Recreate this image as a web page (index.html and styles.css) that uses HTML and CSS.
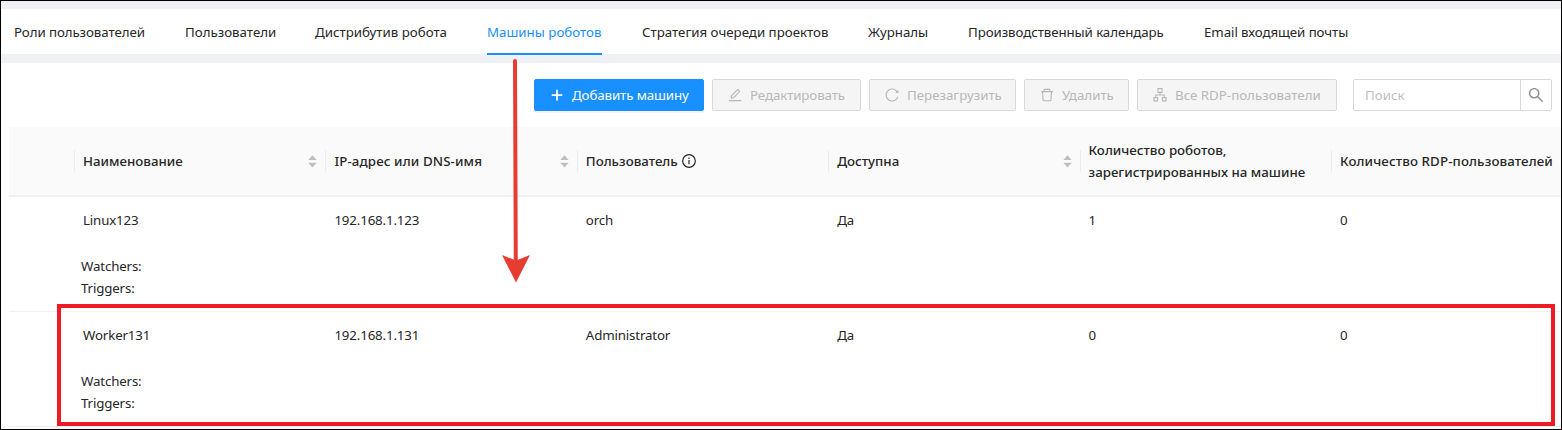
FILE: index.html
```html
<!DOCTYPE html>
<html lang="ru">
<head>
<meta charset="utf-8">
<title>Машины роботов</title>
<link rel="stylesheet" href="styles.css">
</head>
<body>
<svg class="defs" width="0" height="0">
  <symbol id="sorter" viewBox="0 0 9 13"><path d="M4.5 .3 8.7 5H.3zM4.5 12.5.3 7.8h8.4z"/></symbol>
</svg>
<div class="page">
  <nav class="tabs">
    <a class="tab tight">Роли пользователей</a>
    <a class="tab">Пользователи</a>
    <a class="tab">Дистрибутив робота</a>
    <a class="tab active">Машины роботов</a>
    <a class="tab">Стратегия очереди проектов</a>
    <a class="tab">Журналы</a>
    <a class="tab tight">Производственный календарь</a>
    <a class="tab tight">Email входящей почты</a>
  </nav>
  <main class="content">
    <div class="toolbar">
      <button class="btn primary"><svg class="icon" viewBox="0 0 16 16"><path d="M7.1 2.7h1.8v4.5h4.4v1.7H8.9v4.5H7.1V8.9H2.7V7.2h4.4z"/></svg><span>Добавить машину</span></button>
      <button class="btn edit" disabled><svg class="icon" viewBox="0 0 1024 1024"><path d="M257.7 752c2 0 4-.2 6-.5L431.9 722c2-.4 3.9-1.3 5.3-2.8l423.9-423.9a9.96 9.96 0 000-14.1L694.9 114.9c-1.9-1.9-4.4-2.9-7.1-2.9s-5.2 1-7.1 2.9L256.8 538.8c-1.5 1.5-2.4 3.3-2.8 5.3l-29.5 168.2a33.5 33.5 0 009.4 29.8c6.6 6.4 14.9 9.9 23.8 9.9zm67.4-174.4L687.8 215l73.3 73.3-362.7 362.6-88.9 15.7 15.6-89zM880 836H144c-17.7 0-32 14.3-32 32v36c0 4.4 3.6 8 8 8h784c4.4 0 8-3.6 8-8v-36c0-17.7-14.3-32-32-32z"/></svg><span>Редактировать</span></button>
      <button class="btn reload" disabled><svg class="icon" viewBox="0 0 1024 1024"><path d="M909.1 209.3l-56.4 44.1C775.8 155.1 656.2 92 521.9 92 290 92 102.3 279.5 102 511.5 101.7 743.7 289.8 932 521.9 932c181.3 0 335.8-115 394.6-276.1 1.5-4.2-.7-8.9-4.9-10.3l-56.7-19.5a8 8 0 00-10.1 4.8c-1.8 5-3.8 10-5.9 14.9-17.3 41-42.1 77.8-73.7 109.4A344.77 344.77 0 01655.9 829c-42.3 17.9-87.4 27-133.8 27-46.5 0-91.5-9.1-133.8-27A341.5 341.5 0 01279 755.2a342.16 342.16 0 01-73.7-109.4c-17.9-42.4-27-87.4-27-133.9s9.1-91.5 27-133.9c17.3-41 42.1-77.8 73.7-109.4 31.6-31.6 68.4-56.4 109.3-73.8 42.3-17.9 87.4-27 133.8-27 46.5 0 91.5 9.1 133.8 27a341.5 341.5 0 01109.3 73.8c9.9 9.9 19.2 20.4 27.8 31.4l-60.2 47a8 8 0 003 14.1l175.6 43c5 1.2 9.9-2.6 9.9-7.7l.8-180.9c-.1-6.6-7.8-10.3-13-6.2z"/></svg><span>Перезагрузить</span></button>
      <button class="btn delete" disabled><svg class="icon" viewBox="0 0 1024 1024"><path d="M360 184h-8c4.4 0 8-3.6 8-8v8h304v-8c0 4.4 3.6 8 8 8h-8v72h72v-80c0-35.3-28.7-64-64-64H352c-35.3 0-64 28.7-64 64v80h72v-72zm504 72H160c-17.7 0-32 14.3-32 32v32c0 4.4 3.6 8 8 8h60.4l24.7 523c1.6 34.1 29.8 61 63.9 61h454c34.2 0 62.3-26.8 63.9-61l24.7-523H888c4.4 0 8-3.6 8-8v-32c0-17.7-14.3-32-32-32zM731.3 840H292.7l-24.2-512h487l-24.2 512z"/></svg><span>Удалить</span></button>
      <button class="btn rdp" disabled><svg class="icon line" viewBox="0 0 16 16"><path d="M6 1.6h4v3.8H6zM1.9 10.6h3.7v3.3H1.9zM10.4 10.6h3.7v3.3h-3.7zM8 5.4V8M3.7 10.6V8h8.6v2.6"/></svg><span>Все RDP-пользователи</span></button>
      <div class="search">
        <input class="search-input" type="text" placeholder="Поиск">
        <button class="search-btn"><svg class="icon" viewBox="0 0 1024 1024"><path d="M909.6 854.5L649.9 594.8C690.2 542.7 712 479 712 412c0-80.2-31.3-155.4-87.9-212.1-56.6-56.7-132-87.9-212.1-87.9s-155.5 31.3-212.1 87.9C143.2 256.5 112 331.8 112 412c0 80.1 31.3 155.5 87.9 212.1C256.5 680.8 331.8 712 412 712c67 0 130.6-21.8 182.7-62l259.7 259.6a8.2 8.2 0 0011.6 0l43.6-43.5a8.2 8.2 0 000-11.6zM570.4 570.4C528 612.7 471.8 636 412 636s-116-23.3-158.4-65.6C211.3 528 188 471.8 188 412s23.3-116.1 65.6-158.4C296 211.3 352.2 188 412 188s116.1 23.2 158.4 65.6S636 352.2 636 412s-23.3 116.1-65.6 158.4z"/></svg></button>
      </div>
    </div>
    <div class="table">
      <div class="row head">
        <div class="th"></div>
        <div class="th"><span>Наименование</span><svg class="sorter"><use href="#sorter"/></svg></div>
        <div class="th"><span class="wide">IP-адрес или DNS-имя</span><svg class="sorter"><use href="#sorter"/></svg></div>
        <div class="th"><span>Пользователь</span><svg class="info" viewBox="0 0 14 14"><circle cx="7" cy="7" r="6.3"/><path d="M7 6v4.2M7 3.6v1.3"/></svg></div>
        <div class="th"><span>Доступна</span><svg class="sorter"><use href="#sorter"/></svg></div>
        <div class="th"><span>Количество роботов, зарегистрированных на машине</span></div>
        <div class="th"><span class="wide">Количество RDP-пользователей</span></div>
      </div>
      <div class="row">
        <div class="td"></div>
        <div class="td"><span>Linux123</span><div class="extra"><div>Watchers:</div><div>Triggers:</div></div></div>
        <div class="td">192.168.1.123</div>
        <div class="td">orch</div>
        <div class="td">Да</div>
        <div class="td">1</div>
        <div class="td">0</div>
      </div>
      <div class="row">
        <div class="td"></div>
        <div class="td"><span>Worker131</span><div class="extra"><div>Watchers:</div><div>Triggers:</div></div></div>
        <div class="td">192.168.1.131</div>
        <div class="td">Administrator</div>
        <div class="td">Да</div>
        <div class="td">0</div>
        <div class="td">0</div>
      </div>
    </div>
  </main>
  <svg class="arrow" viewBox="0 0 28 224"><path class="shaft" d="M13 2 13.8 205"/><path class="tip" d="M0 196 14 201.5 28 196 14 223.5z"/></svg>
  <div class="highlight"></div>
</div>
</body>
</html>
```
FILE: styles.css
```css
* { box-sizing: border-box; }
body {
  margin: 0;
  font-family: "Noto Sans", "Open Sans", sans-serif;
  font-size: 13.3px;
  line-height: 22px;
  color: #262626;
  overflow: hidden;
}
.defs { position: absolute; }
.page {
  position: relative;
  width: 1562px;
  height: 430px;
  border: 1px solid #000;
  padding-top: 8px;
  background: #f0f1f5;
  overflow: hidden;
}
.tabs {
  display: grid;
  grid-template-columns: 131px 90px 132px 115px 186px 60px 196px 144px;
  column-gap: 40px;
  height: 45px;
  padding-left: 13px;
  background: #fff;
}
.tab {
  height: 46px;
  padding-top: 12px;
  white-space: nowrap;
}
.tab.tight { letter-spacing: -.08px; }
.tab.active { color: #1890ff; border-bottom: 2px solid #1890ff; }
.content {
  height: 366px;
  margin-top: 9px;
  padding: 16px 0 0 8px;
  background: #fff;
  overflow: hidden;
}
.toolbar {
  display: flex;
  justify-content: flex-end;
  gap: 8px;
  height: 32px;
  margin-right: 9px;
}
.btn {
  display: flex;
  align-items: center;
  gap: 7px;
  padding: 0 0 0 14px;
  border: 1px solid #d9d9d9;
  border-radius: 2px;
  background: #f5f5f5;
  color: #b8b8b8;
  font: inherit;
  white-space: nowrap;
}
.btn.primary {
  width: 170px;
  letter-spacing: -.1px;
  border-color: #1890ff;
  background: #1890ff;
  color: #fff;
  box-shadow: 0 2px 0 rgba(0, 0, 0, .045);
}
.edit { width: 149px; letter-spacing: -.1px; }
.reload { width: 147px; }
.delete { width: 105px; }
.rdp { width: 200px; }
.icon { width: 16px; height: 16px; flex: none; fill: currentColor; }
.icon.line { fill: none; stroke: currentColor; stroke-width: 1.1; }
.search {
  display: flex;
  width: 199px;
  margin-left: 8px;
  border: 1px solid #d9d9d9;
  border-radius: 2px;
}
.search-input {
  width: 166px;
  padding: 0 11px;
  border: 0;
  background: none;
  font: inherit;
}
.search-input::placeholder { color: #bfbfbf; }
.search-btn {
  display: flex;
  align-items: center;
  justify-content: center;
  width: 32px;
  padding: 0;
  border: 0;
  border-left: 1px solid #d9d9d9;
  background: none;
  color: #8c8c8c;
}
.search-btn .icon { width: 18px; height: 18px; }
.table { margin-top: 16px; }
.row {
  display: grid;
  grid-template-columns: 66px repeat(6, 251.4px);
  height: 115px;
  border-bottom: 1px solid #f0f0f0;
}
.row.head {
  height: 70px;
  border-bottom: 2px solid #f0f0f0;
  background: #fafafa;
  font-weight: 500;
}
.th {
  display: flex;
  align-items: center;
  padding: 0 9px 0 8px;
  background: linear-gradient(#ebebeb, #ebebeb) right 23px / 1px 22px no-repeat;
}
.th:last-child { background: none; white-space: nowrap; }
.wide { letter-spacing: .12px; }
.sorter { width: 9px; height: 13px; margin-left: auto; flex: none; fill: #bfbfbf; }
.info { width: 14px; height: 14px; margin-left: 4px; fill: none; stroke: #262626; stroke-width: 1.2; }
.td { padding: 12px 8px; letter-spacing: -.15px; }
.extra { margin: 24px 0 0 -2px; }
.arrow {
  position: absolute;
  left: 501px;
  top: 58px;
  width: 28px;
  height: 224px;
}
.shaft { stroke: #e53d32; stroke-width: 4; stroke-linecap: round; }
.tip { fill: #e53d32; }
.highlight {
  position: absolute;
  left: 56px;
  top: 303px;
  width: 1498px;
  height: 122px;
  border: 4px solid #ed1c24;
}
```
